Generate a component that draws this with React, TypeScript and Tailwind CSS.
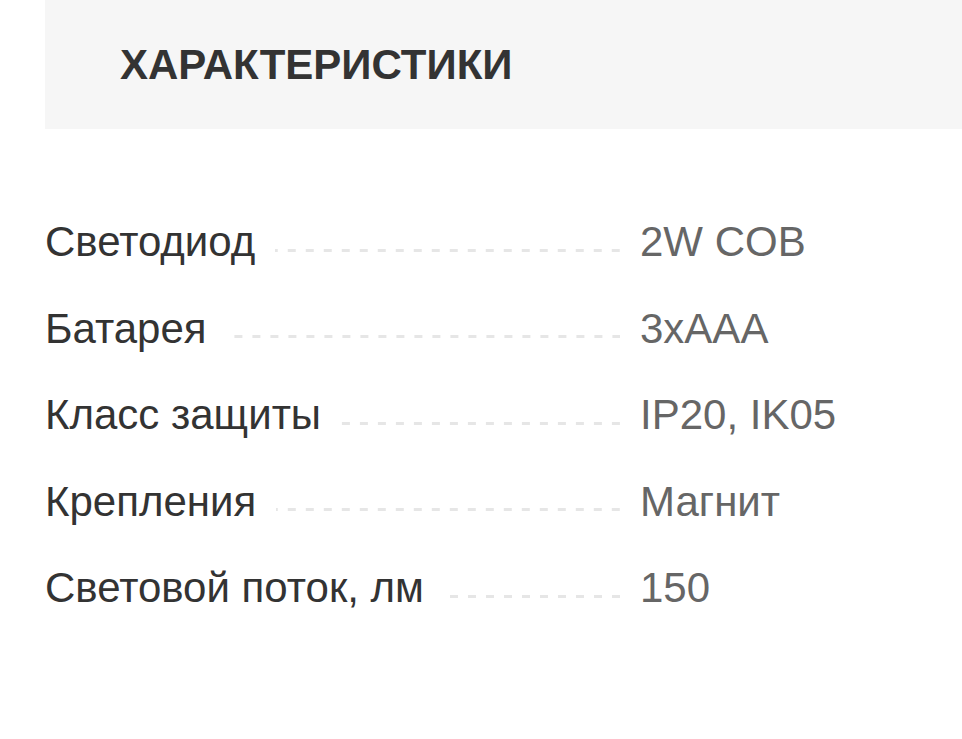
const specs = [
  { label: "Светодиод", value: "2W COB" },
  { label: "Батарея", value: "3xAAA" },
  { label: "Класс защиты", value: "IP20, IK05" },
  { label: "Крепления", value: "Магнит" },
  { label: "Световой поток, лм", value: "150" },
];

export default function App() {
  return (
    <div className="min-h-[739px] bg-white pl-[45px] font-['Liberation_Sans',Arial,sans-serif]">
      {/* Header */}
      <div className="flex h-[129px] items-center bg-[#f6f6f6] pl-[75px]">
        <h2 className="text-[42px] font-bold leading-none text-[#333]">
          ХАРАКТЕРИСТИКИ
        </h2>
      </div>

      {/* Specs */}
      <div className="mt-[70px] flex flex-col">
        {specs.map((s) => (
          <div key={s.label} className="flex h-[86.5px] items-center">
            <div className="flex w-[595px] items-center">
              <span className="text-[42px] leading-none text-[#333]">
                {s.label}
              </span>
              <span className="ml-[20px] mr-[20px] mt-[16px] h-[3px] flex-1 bg-[linear-gradient(to_right,transparent_10px,#e6e6e6_10px)] bg-[length:18px_3px] bg-right bg-repeat-x" />
            </div>
            <span className="text-[42px] leading-none text-[#666]">
              {s.value}
            </span>
          </div>
        ))}
      </div>
    </div>
  );
}
